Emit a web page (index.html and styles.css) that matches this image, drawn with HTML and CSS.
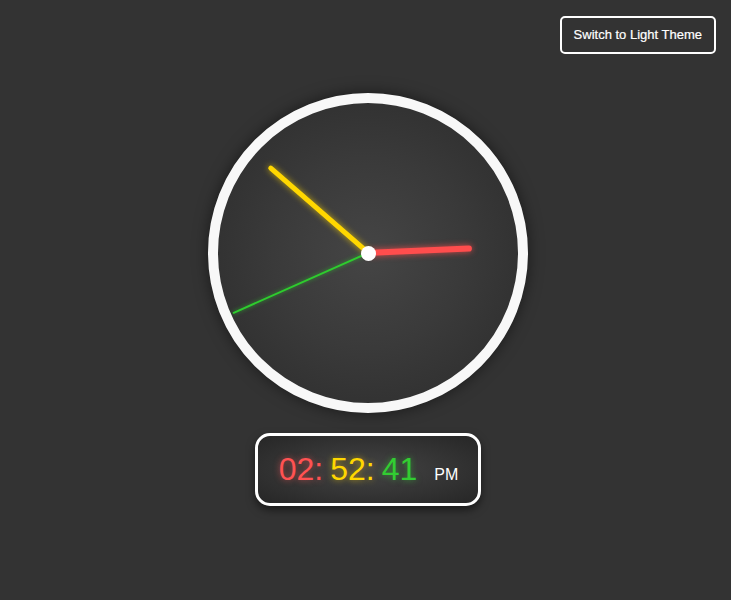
FILE: index.html
```html
<!DOCTYPE html>
<html>
<head>
<meta charset="utf-8">
<link rel="stylesheet" href="styles.css">
</head>
<body>
<header class="topbar">
  <button class="theme-btn">Switch to Light Theme</button>
</header>
<main class="stage">
  <div class="clock">
    <div class="hand hour"></div>
    <div class="hand minute"></div>
    <div class="hand second"></div>
    <div class="pin"></div>
  </div>
  <div class="digital">
    <span class="d-h">02:</span>
    <span class="d-m">52:</span>
    <span class="d-s">41</span>
    <span class="d-ampm">PM</span>
  </div>
</main>
</body>
</html>
```
FILE: styles.css
```css
html, body {
  margin: 0;
  padding: 0;
  background: #333333;
  font-family: "Liberation Sans", Arial, sans-serif;
  height: 100%;
}
.topbar {
  display: flex;
  justify-content: flex-end;
  padding: 16px 15px 0 0;
}
.theme-btn {
  font-family: "Liberation Sans", Arial, sans-serif;
  font-size: 13px;
  line-height: 14px;
  padding: 10px 12px;
  color: #ffffff;
  background: #333333;
  border: 2px solid #ffffff;
  border-radius: 5px;
  cursor: pointer;
  -webkit-text-stroke: 0.2px #ffffff;
}
.stage {
  display: flex;
  flex-direction: column;
  align-items: center;
  padding-left: 5px;
  margin-top: 39px;
}
.clock {
  position: relative;
  width: 300px;
  height: 300px;
  border: 10px solid #f8f8f8;
  border-radius: 50%;
  background: radial-gradient(circle, #454545 0%, #3a3a3a 45%, #2a2a2a 100%);
  box-shadow: 0 0 15px rgba(0,0,0,0.5);
}
.hand {
  position: absolute;
  left: 50%;
  bottom: 50%;
  transform-origin: 50% 100%;
  border-radius: 3px;
}
.hour {
  width: 6px;
  height: 104px;
  margin-left: -3px;
  background: #ff4d4d;
  box-shadow: 0 0 6px rgba(255,77,77,0.8);
  transform: rotate(87.5deg);
}
.minute {
  width: 5px;
  height: 132px;
  margin-left: -2.5px;
  background: #ffd700;
  box-shadow: 0 0 6px rgba(255,215,0,0.7);
  transform: rotate(311deg);
}
.second {
  width: 2px;
  height: 148px;
  margin-left: -1px;
  background: #2ecc2e;
  box-shadow: 0 0 4px rgba(46,204,46,0.7);
  transform: rotate(246deg);
}
.pin {
  position: absolute;
  left: 50%;
  top: 50%;
  width: 15px;
  height: 15px;
  margin: -7.5px 0 0 -7.5px;
  border-radius: 50%;
  background: #ffffff;
}
.digital {
  margin-top: 20px;
  display: flex;
  align-items: baseline;
  padding: 15px 20px 15px 21px;
  border: 3px solid #ffffff;
  border-radius: 15px;
  background: radial-gradient(ellipse at center, #444444 0%, #262626 100%);
  box-shadow: 0 4px 8px rgba(0,0,0,0.5);
  font-size: 32px;
  line-height: 37px;
}
.d-h { color: #ff5252; text-shadow: 0 0 6px rgba(255,82,82,0.6); margin-right: 7px; }
.d-m { color: #ffd700; text-shadow: 0 0 6px rgba(255,215,0,0.6); margin-right: 7px; }
.d-s { color: #32cd32; text-shadow: 0 0 6px rgba(50,205,50,0.6); }
.d-ampm { color: #ffffff; font-size: 16px; line-height: 16px; margin-left: 17px; }
```
